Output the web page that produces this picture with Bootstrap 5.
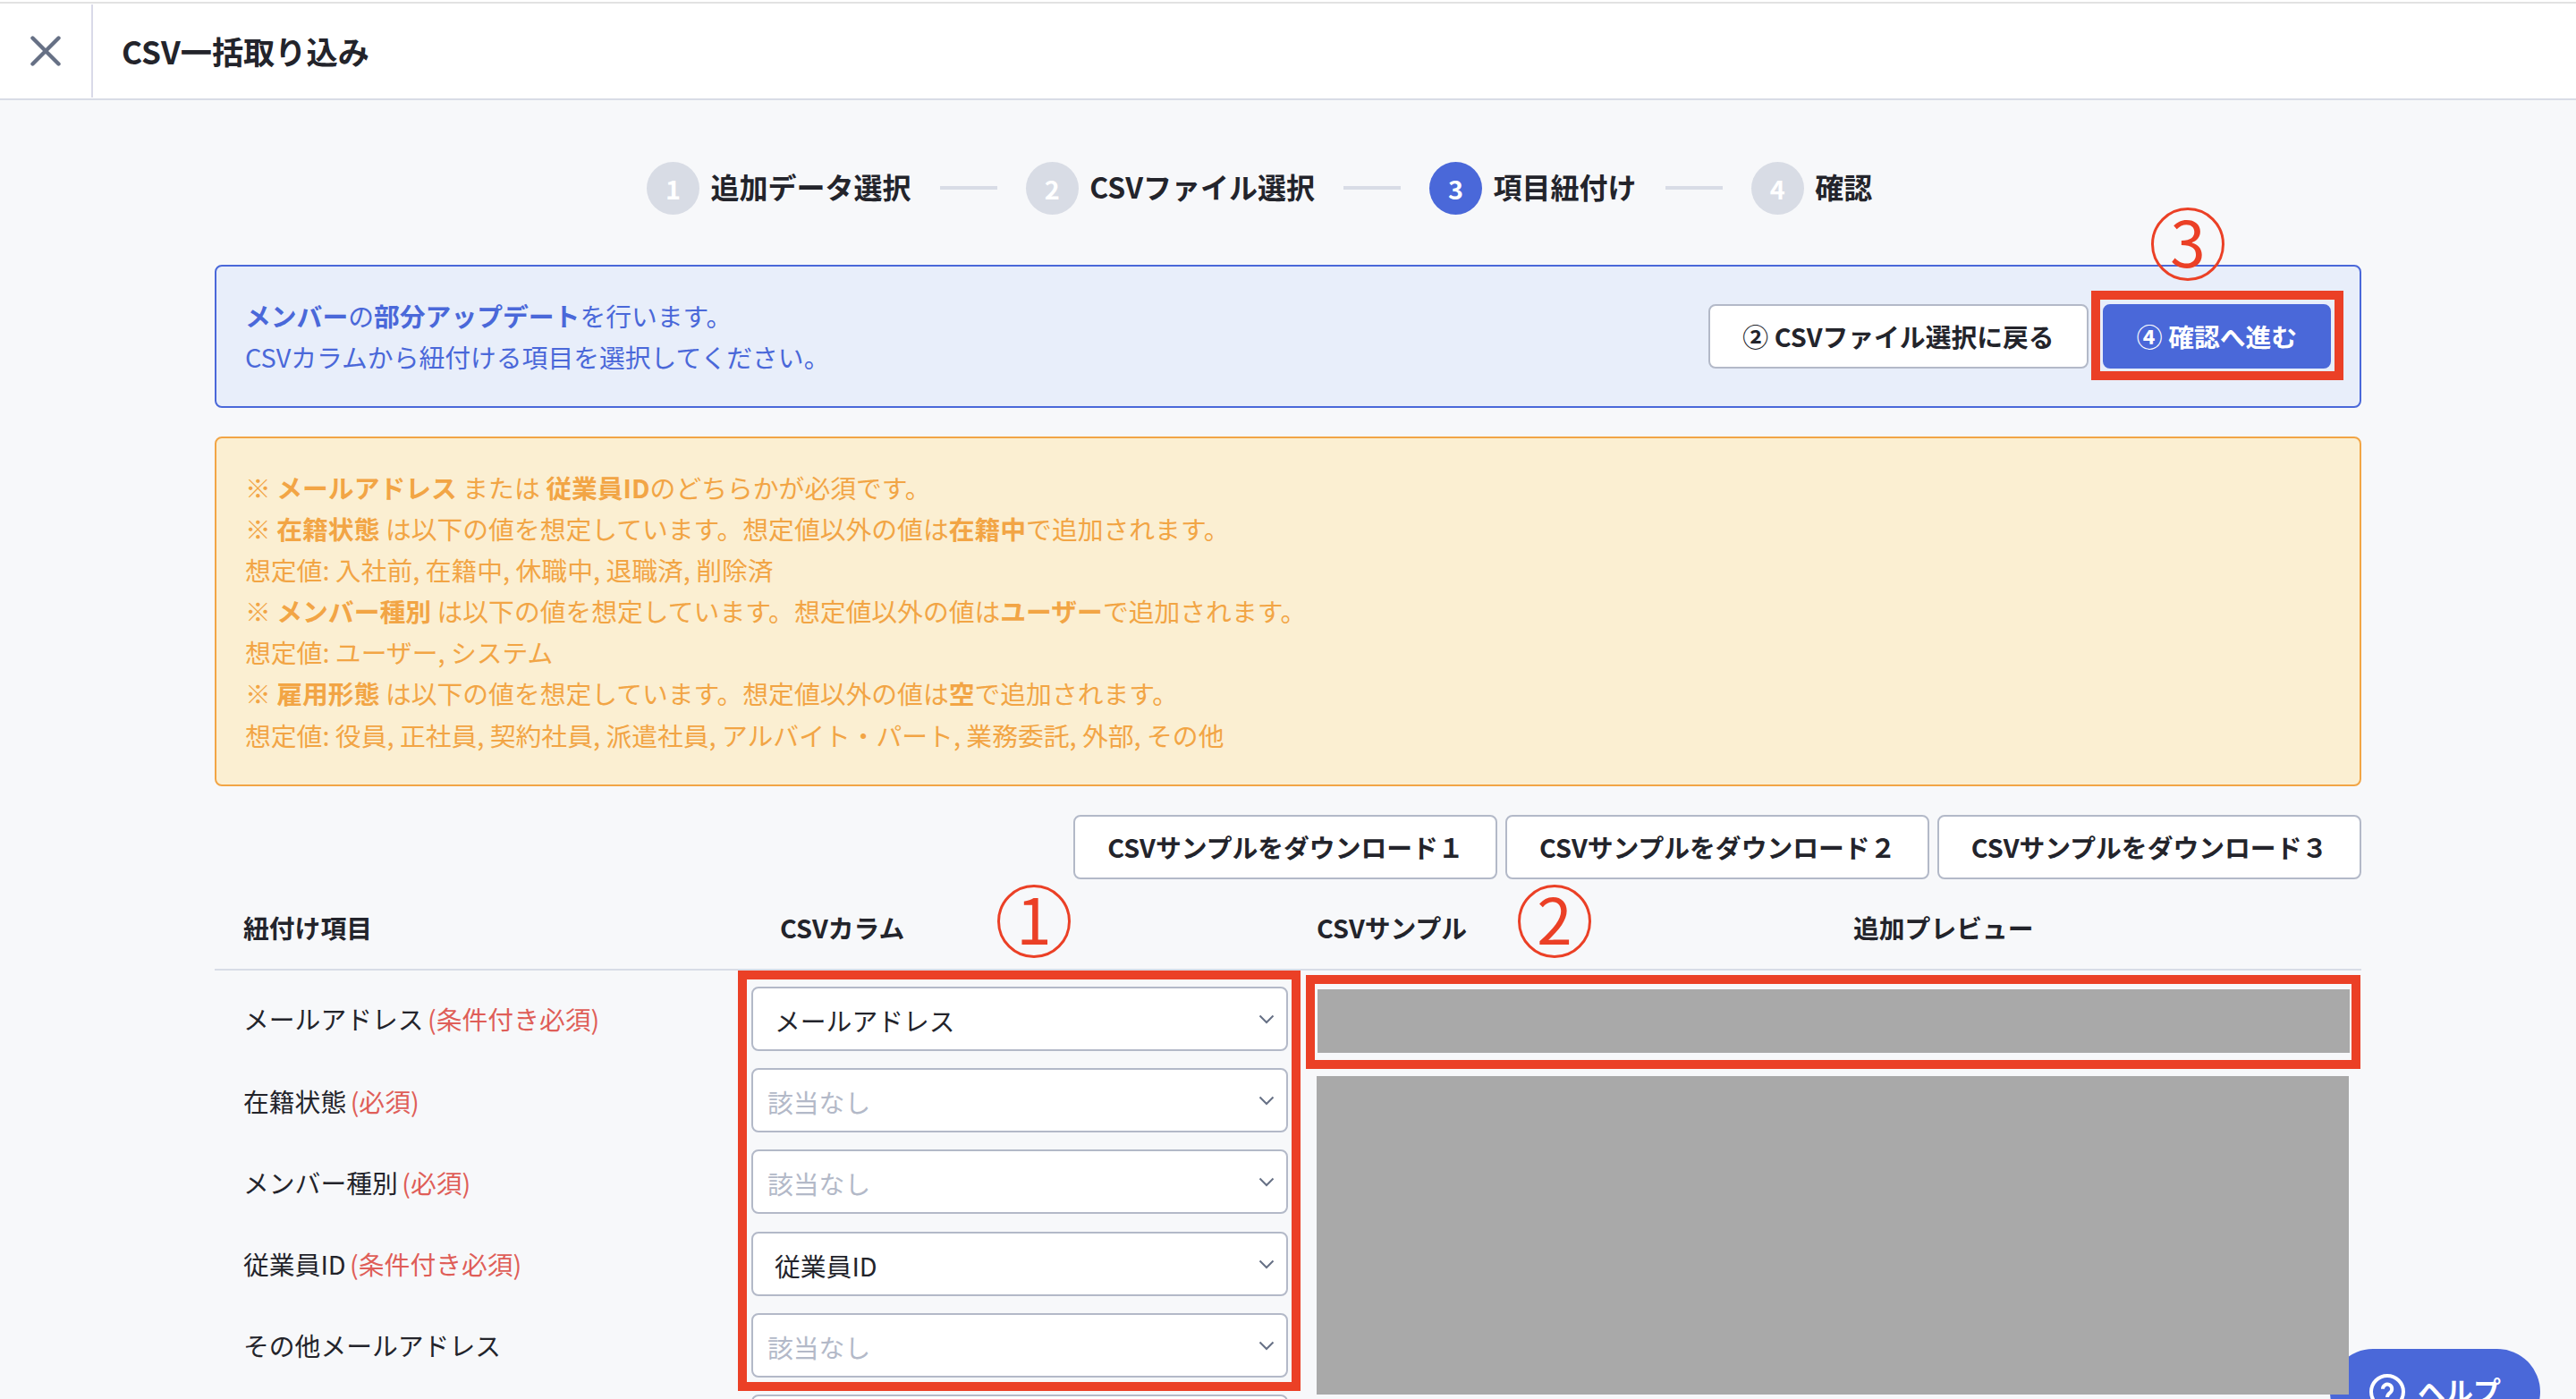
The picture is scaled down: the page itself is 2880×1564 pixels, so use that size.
<!DOCTYPE html>
<html lang="ja">
<head>
    <meta charset="UTF-8">
    <meta name="viewport" content="width=device-width, initial-scale=1.0">
    <title>CSV一括取り込み</title>
    <!-- Bootstrap CSS -->
    <link href="https://cdn.jsdelivr.net/npm/bootstrap@5.3.2/dist/css/bootstrap.min.css" rel="stylesheet">
    <style>
        :root {
            --main: #4a68d9;
            --line: #d8dce6;
            --edge: #b3b9c8;
            --mark: #eb4026;
        }
        body {
            height: 1564px;
            overflow: hidden;
            background-color: #f7f8fa;
            color: #23242b;
            font-family: "Noto Sans CJK JP", sans-serif;
            font-size: 28.8px;
            line-height: 1.6;
        }
        .page-head {
            height: 112px;
            padding-top: 2px;
            background-color: #fff;
            border-bottom: 2px solid var(--line);
        }
        .page-head-inner {
            height: 108px;
            border-top: 2px solid #e2e2e2;
        }
        .close-box {
            width: 104px;
            height: 104px;
            border-right: 2px solid #d9dae8;
        }
        .page-title {
            font-size: 35.2px;
            margin: 0 0 0 32px;
        }
        .steps {
            height: 184px;
            padding: 69px 0 0 723px;
            font-size: 32px;
        }
        .step-no {
            width: 59.2px;
            height: 59.2px;
            margin-right: 12.4px;
            border-radius: 50%;
            background-color: #d8dce5;
            color: #fff;
            font-size: 28.8px;
        }
        .step-no.current { background-color: var(--main); }
        .step-name { margin-top: -4px; }
        .step-bar {
            width: 64px;
            height: 4px;
            margin: -1px 32px 0;
            background-color: var(--line);
        }
        .content { width: 2400px; }
        .notice {
            padding: 32px;
            border: 2px solid;
            border-radius: 8px;
        }
        .notice-info {
            height: 160px;
            color: var(--main);
            background-color: #e8eefa;
        }
        .notice-warn {
            height: 391px;
            margin-top: 32px;
            line-height: 46.1px;
            color: #f2a545;
            background-color: #fbefd2;
        }
        .action {
            height: 72px;
            border: 2px solid var(--edge);
            border-radius: 8px;
            background-color: #fff;
            color: #23242b;
            font-size: 28.8px;
            font-weight: 700;
            padding: 0;
        }
        .action-back { width: 425px; }
        .action-next {
            width: 255px;
            background-color: var(--main);
            border-color: var(--main);
            color: #fff;
        }
        .action-dl { width: 474px; }
        .downloads {
            margin-top: 32px;
            gap: 8.8px;
        }
        .map-head {
            height: 102px;
            padding-top: 8px;
            border-bottom: 2px solid var(--line);
            font-weight: 700;
        }
        .map-head > div {
            width: 600px;
            padding-left: 32px;
        }
        .map-rows {
            height: 479px;
            padding-top: 18px;
            overflow: hidden;
        }
        .map-row {
            height: 72px;
            margin-bottom: 19.2px;
        }
        .map-label {
            width: 600px;
            padding: 1px 0 0 32px;
        }
        .need {
            margin-left: -2px;
            color: #df5e58;
        }
        .picker {
            width: 600px;
            height: 72px;
            padding: 4px 12px 0 24px;
            border: 2px solid var(--edge);
            border-radius: 8px;
            background-color: #fff;
        }
        .picker.unset {
            padding-left: 16px;
            color: var(--edge);
        }
        .picker svg { margin-top: -2px; }
        .mask {
            background-color: #a9a9a9;
            width: 1154px;
            position: relative;
            z-index: 3;
        }
        .mask-top {
            height: 71px;
            margin: 21px 0 0 33px;
        }
        .mask-rest {
            height: 356px;
            margin: 26px 0 0 32px;
        }
        /* 説明用の赤枠と番号 */
        .frame {
            position: absolute;
            z-index: 4;
            border: 10px solid var(--mark);
        }
        .frame-1 { left: 825px; top: 1085px; width: 629px; height: 470px; }
        .frame-2 { left: 1460px; top: 1090px; width: 1179px; height: 105px; }
        .frame-3 { left: 2338px; top: 325px; width: 282px; height: 100px; }
        .num {
            position: absolute;
            z-index: 4;
            width: 82px;
            height: 82px;
            border: 3px solid var(--mark);
            border-radius: 50%;
            color: var(--mark);
            font-size: 71px;
            line-height: 67px;
            text-align: center;
        }
        .num-1 { left: 1115px; top: 989px; }
        .num-2 { left: 1697px; top: 989px; }
        .num-3 { left: 2405px; top: 232px; }
        .help {
            position: absolute;
            z-index: 2;
            left: 2605px;
            top: 1508px;
            width: 235px;
            height: 96px;
            padding-left: 44px;
            border-radius: 48px;
            background-color: var(--main);
            color: #fff;
            font-size: 31px;
            font-weight: 700;
        }
        .help svg { margin-right: 14px; }
        .help span { margin-top: -4px; }
    </style>
</head>
<body class="position-relative">
    <header class="page-head">
        <div class="page-head-inner d-flex align-items-center">
            <div class="close-box d-flex align-items-center justify-content-center">
                <svg width="34" height="34" viewBox="0 0 34 34" fill="none" stroke="#667085" stroke-width="4.4" stroke-linecap="round">
                    <path d="M2.5 2.5l29 29M31.5 2.5l-29 29"/>
                </svg>
            </div>
            <h1 class="page-title fw-bold">CSV一括取り込み</h1>
        </div>
    </header>

    <div class="steps d-flex align-items-start fw-bold">
        <div class="d-flex align-items-center">
            <span class="step-no d-flex align-items-center justify-content-center">1</span>
            <span class="step-name">追加データ選択</span>
            <span class="step-bar"></span>
            <span class="step-no d-flex align-items-center justify-content-center">2</span>
            <span class="step-name">CSVファイル選択</span>
            <span class="step-bar"></span>
            <span class="step-no current d-flex align-items-center justify-content-center">3</span>
            <span class="step-name">項目紐付け</span>
            <span class="step-bar"></span>
            <span class="step-no d-flex align-items-center justify-content-center">4</span>
            <span class="step-name">確認</span>
        </div>
    </div>

    <main class="content mx-auto">
        <div class="notice notice-info d-flex align-items-center justify-content-between">
            <div>
                <b>メンバー</b>の<b>部分アップデート</b>を行います。<br>
                CSVカラムから紐付ける項目を選択してください。
            </div>
            <div class="d-flex gap-3">
                <button type="button" class="btn action action-back">② CSVファイル選択に戻る</button>
                <button type="button" class="btn action action-next">④ 確認へ進む</button>
            </div>
        </div>

        <div class="notice notice-warn">
            ※ <b>メールアドレス</b> または <b>従業員ID</b>のどちらかが必須です。<br>
            ※ <b>在籍状態</b> は以下の値を想定しています。想定値以外の値は<b>在籍中</b>で追加されます。<br>
            想定値: 入社前, 在籍中, 休職中, 退職済, 削除済<br>
            ※ <b>メンバー種別</b> は以下の値を想定しています。想定値以外の値は<b>ユーザー</b>で追加されます。<br>
            想定値: ユーザー, システム<br>
            ※ <b>雇用形態</b> は以下の値を想定しています。想定値以外の値は<b>空</b>で追加されます。<br>
            想定値: 役員, 正社員, 契約社員, 派遣社員, アルバイト・パート, 業務委託, 外部, その他
        </div>

        <div class="downloads d-flex justify-content-end">
            <button type="button" class="btn action action-dl">CSVサンプルをダウンロード１</button>
            <button type="button" class="btn action action-dl">CSVサンプルをダウンロード２</button>
            <button type="button" class="btn action action-dl">CSVサンプルをダウンロード３</button>
        </div>

        <div class="map-head d-flex align-items-center">
            <div>紐付け項目</div>
            <div>CSVカラム</div>
            <div>CSVサンプル</div>
            <div>追加プレビュー</div>
        </div>
        <div class="d-flex align-items-start">
            <div class="map-rows">
                <div class="map-row d-flex align-items-center">
                    <div class="map-label">メールアドレス <span class="need">(条件付き必須)</span></div>
                    <div class="picker d-flex align-items-center justify-content-between">メールアドレス
                        <svg width="20" height="12" viewBox="0 0 20 12" fill="none" stroke="#667085" stroke-width="2"><path d="M2.5 1.5l7.5 7.5 7.5-7.5"/></svg>
                    </div>
                </div>
                <div class="map-row d-flex align-items-center">
                    <div class="map-label">在籍状態 <span class="need">(必須)</span></div>
                    <div class="picker unset d-flex align-items-center justify-content-between">該当なし
                        <svg width="20" height="12" viewBox="0 0 20 12" fill="none" stroke="#667085" stroke-width="2"><path d="M2.5 1.5l7.5 7.5 7.5-7.5"/></svg>
                    </div>
                </div>
                <div class="map-row d-flex align-items-center">
                    <div class="map-label">メンバー種別 <span class="need">(必須)</span></div>
                    <div class="picker unset d-flex align-items-center justify-content-between">該当なし
                        <svg width="20" height="12" viewBox="0 0 20 12" fill="none" stroke="#667085" stroke-width="2"><path d="M2.5 1.5l7.5 7.5 7.5-7.5"/></svg>
                    </div>
                </div>
                <div class="map-row d-flex align-items-center">
                    <div class="map-label">従業員ID <span class="need">(条件付き必須)</span></div>
                    <div class="picker d-flex align-items-center justify-content-between">従業員ID
                        <svg width="20" height="12" viewBox="0 0 20 12" fill="none" stroke="#667085" stroke-width="2"><path d="M2.5 1.5l7.5 7.5 7.5-7.5"/></svg>
                    </div>
                </div>
                <div class="map-row d-flex align-items-center">
                    <div class="map-label">その他メールアドレス</div>
                    <div class="picker unset d-flex align-items-center justify-content-between">該当なし
                        <svg width="20" height="12" viewBox="0 0 20 12" fill="none" stroke="#667085" stroke-width="2"><path d="M2.5 1.5l7.5 7.5 7.5-7.5"/></svg>
                    </div>
                </div>
                <div class="map-row d-flex align-items-center">
                    <div class="map-label"></div>
                    <div class="picker"></div>
                </div>
            </div>
            <div>
                <div class="mask mask-top"></div>
                <div class="mask mask-rest"></div>
            </div>
        </div>
    </main>

    <div class="help d-flex align-items-center">
        <svg width="40" height="40" viewBox="0 0 40 40" fill="none" stroke="#fff" stroke-width="4">
            <circle cx="20" cy="20" r="18"/>
            <path d="M15 16.8a5.1 5.1 0 1 1 8.2 4c-2 1.6-3.2 2.6-3.2 5.2"/>
            <path d="M20 28v4"/>
        </svg>
        <span>ヘルプ</span>
    </div>

    <div class="frame frame-1"></div>
    <div class="frame frame-2"></div>
    <div class="frame frame-3"></div>
    <div class="num num-1">1</div>
    <div class="num num-2">2</div>
    <div class="num num-3">3</div>

    <!-- Bootstrap JS -->
    <script src="https://cdn.jsdelivr.net/npm/bootstrap@5.3.2/dist/js/bootstrap.bundle.min.js"></script>
</body>
</html>
